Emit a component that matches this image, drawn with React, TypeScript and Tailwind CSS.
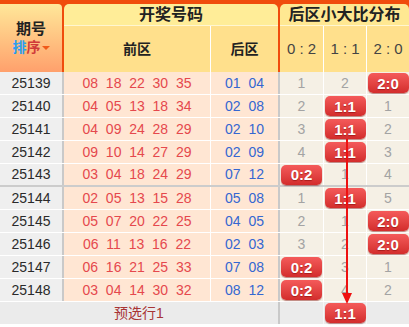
import React from "react";

type Row = { id: string; front: string[]; back: string[]; dist: (string | number)[] };

const rows: Row[] = [
  { id: "25139", front: ["08", "18", "22", "30", "35"], back: ["01", "04"], dist: [1, 2, "2:0"] },
  { id: "25140", front: ["04", "05", "13", "18", "34"], back: ["02", "08"], dist: [2, "1:1", 1] },
  { id: "25141", front: ["04", "09", "24", "28", "29"], back: ["02", "10"], dist: [3, "1:1", 2] },
  { id: "25142", front: ["09", "10", "14", "27", "29"], back: ["02", "09"], dist: [4, "1:1", 3] },
  { id: "25143", front: ["03", "04", "18", "24", "29"], back: ["07", "12"], dist: ["0:2", 1, 4] },
  { id: "25144", front: ["02", "05", "13", "15", "28"], back: ["05", "08"], dist: [1, "1:1", 5] },
  { id: "25145", front: ["05", "07", "20", "22", "25"], back: ["04", "05"], dist: [2, 1, "2:0"] },
  { id: "25146", front: ["06", "11", "13", "16", "22"], back: ["02", "03"], dist: [3, 2, "2:0"] },
  { id: "25147", front: ["06", "16", "21", "25", "33"], back: ["07", "08"], dist: ["0:2", 3, 1] },
  { id: "25148", front: ["03", "04", "14", "30", "32"], back: ["08", "12"], dist: ["0:2", 4, 2] },
];

const font = { fontFamily: '"Liberation Sans", Arial, "Noto Sans CJK SC", sans-serif' };

function Badge({ t }: { t: string }) {
  return (
    <div className="w-[41px] h-[20px] rounded-[5px] bg-linear-to-b from-[#f45a5a] to-[#d32c2c] shadow-[0_1px_1px_rgba(120,0,0,0.45)] flex items-center justify-center text-white font-bold text-[15px] leading-none [text-shadow:0_1px_1px_rgba(120,0,0,0.5)]">
      {t}
    </div>
  );
}

function DistCell({ v, w, last }: { v: string | number; w: string; last?: boolean }) {
  return (
    <div className={`${w} h-full flex items-center justify-center ${last ? "" : "border-r border-white"}`}>
      {typeof v === "string" ? <Badge t={v} /> : <span className="text-[14px] text-[#a3a3a3]">{v}</span>}
    </div>
  );
}

export default function App() {
  return (
    <div className="relative w-[409px] h-[327px] bg-white overflow-hidden" style={font}>
      {/* header */}
      <div className="flex bg-[#f04c0c] pt-[4px] h-[72px]">
        <div className="w-[62px] h-[68px] rounded-tr-[4px] bg-linear-to-b from-[#ffe799] to-[#ffa06c] flex flex-col items-center justify-center">
          <div className="text-[15px] font-bold text-[#222] leading-[18px]">期号</div>
          <div className="flex items-center text-[14px] font-bold leading-[17px] mt-[1px]">
            <span className="text-[#2a9ef0]">排</span>
            <span className="text-[#d03a3a]">序</span>
            <span className="ml-[1px] w-0 h-0 border-l-[4px] border-r-[4px] border-t-[4px] border-l-transparent border-r-transparent border-t-[#f05a1a]" />
          </div>
        </div>
        <div className="ml-[2px] w-[214px] h-[68px] rounded-t-[5px] overflow-hidden flex flex-col">
          <div className="h-[22px] bg-[#ffed98] border-b border-[#fff6d0] flex items-center justify-center text-[16px] font-bold text-[#222]">
            开奖号码
          </div>
          <div className="flex-1 flex bg-[#ffe08c]">
            <div className="w-[147px] border-r border-white flex items-center justify-center text-[14px] font-bold text-[#222]">前区</div>
            <div className="w-[67px] flex items-center justify-center text-[14px] font-bold text-[#222]">后区</div>
          </div>
        </div>
        <div className="ml-[2px] w-[129px] h-[68px] rounded-t-[5px] overflow-hidden flex flex-col">
          <div className="h-[22px] bg-[#ffe892] border-b border-[#fff6d0] flex items-center justify-center text-[16px] font-bold text-[#222]">
            后区小大比分布
          </div>
          <div className="flex-1 flex bg-[#ffe08c] text-[15px] text-[#444]">
            <div className="w-[44px] border-r border-white flex items-center justify-center whitespace-pre">0 : 2</div>
            <div className="w-[43px] border-r border-white flex items-center justify-center whitespace-pre">1 : 1</div>
            <div className="w-[42px] flex items-center justify-center whitespace-pre">2 : 0</div>
          </div>
        </div>
      </div>

      {/* rows */}
      {rows.map((r, i) => (
        <div
          key={r.id}
          className={`flex h-[23px] ${i === 4 ? "border-b-2 border-[#cccccc]" : "border-b border-white"}`}
        >
          <div className="w-[64px] h-full bg-[#efefef] border-r-2 border-[#c9c9c9] flex items-center justify-center text-[14px] text-[#2a2a2a]">
            {r.id}
          </div>
          <div className="w-[147px] h-full bg-[#ffe6d3] border-r border-white flex items-center justify-center text-[14px] text-[#e5484d] whitespace-pre">
            {r.front.join("  ")}
          </div>
          <div className="w-[69px] h-full bg-[#ffe6d3] border-r-2 border-[#c9c9c9] flex items-center justify-center text-[14px] text-[#3567d1] whitespace-pre">
            {r.back.join("  ")}
          </div>
          <div className="flex h-full bg-[#f5f0e5]">
            <DistCell v={r.dist[0]} w="w-[44px]" />
            <DistCell v={r.dist[1]} w="w-[43px]" />
            <DistCell v={r.dist[2]} w="w-[42px]" last />
          </div>
        </div>
      ))}

      {/* footer */}
      <div className="flex h-[22px] bg-[#ebebeb]">
        <div className="w-[280px] h-full border-r-2 border-[#c9c9c9] flex items-center justify-center text-[14px] text-[#a83434]">
          预选行1
        </div>
        <div className="w-[44px] h-full border-r border-[#f6f6f6]" />
        <div className="w-[43px] h-full border-r border-[#f6f6f6] flex items-center justify-center">
          <Badge t="1:1" />
        </div>
        <div className="w-[42px] h-full" />
      </div>

      {/* trend arrow overlay */}
      <svg className="absolute left-0 top-0 pointer-events-none" width="409" height="327" viewBox="0 0 409 327">
        <line x1="347" y1="139" x2="347" y2="296" stroke="#ee1111" strokeWidth="2" />
        <polygon points="342,293 352,293 347,304" fill="#ee1111" />
      </svg>
    </div>
  );
}
